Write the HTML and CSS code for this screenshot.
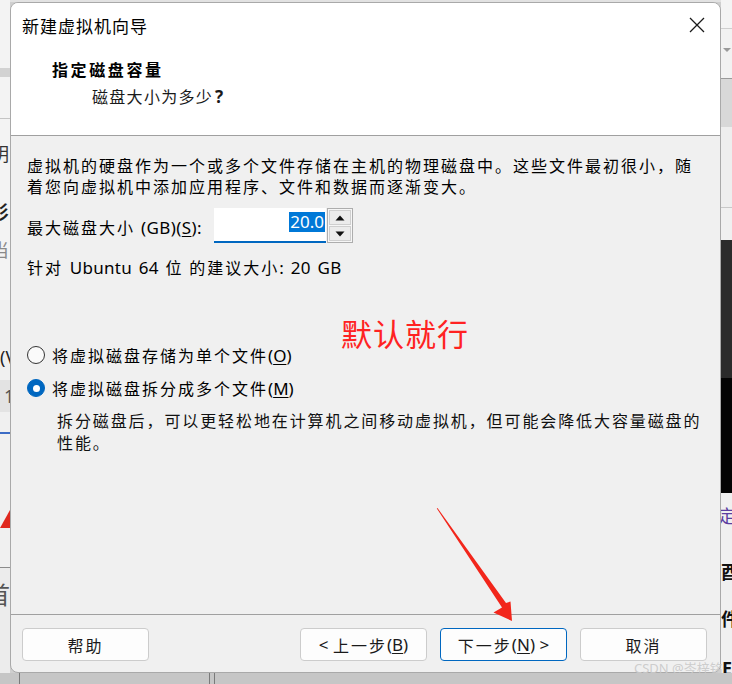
FILE: index.html
```html
<!DOCTYPE html>
<html lang="zh-CN">
<head>
<meta charset="utf-8">
<title>新建虚拟机向导</title>
<link rel="stylesheet" href="styles.css">
</head>
<body>
<div class="screen">
  <div class="strip strip-left">
    <div class="seg l1"></div>
    <div class="seg l2"></div>
    <div class="seg l3"></div>
    <div class="seg l4"></div>
    <div class="seg l5">
      <div class="frag fa">明</div>
      <div class="frag fb">杉</div>
      <div class="frag fc">当</div>
    </div>
    <div class="seg l6"><div class="frag fd">(V</div></div>
    <div class="seg l7"><div class="frag fe">1</div></div>
    <div class="seg l8"></div>
    <div class="seg l9"></div>
    <div class="seg l10"></div>
    <div class="seg l11"><div class="wedge"></div></div>
    <div class="seg l12"></div>
    <div class="seg l13"></div>
    <div class="seg l14"><div class="frag ff">首</div></div>
    <div class="seg l15"></div>
  </div>

  <div class="center">
    <div class="top-gap"></div>
    <div class="dialog">
      <div class="head">
        <div class="titlebar">
          <span class="title">新建虚拟机向导</span>
          <span class="close">
            <svg width="16" height="16" viewBox="0 0 16 16"><path d="M1 1 L15 15 M15 1 L1 15" stroke="#1a1a1a" stroke-width="1.3" fill="none"/></svg>
          </span>
        </div>
        <div class="header">
          <div class="h-title">指定磁盘容量</div>
          <div class="h-sub">磁盘大小为多少<span class="lat q">?</span></div>
        </div>
      </div>

      <div class="body">
        <p class="para">虚拟机的硬盘作为一个或多个文件存储在主机的物理磁盘中。这些文件最初很小，随<br>着您向虚拟机中添加应用程序、文件和数据而逐渐变大。</p>

        <div class="size-row">
          <label class="size-label">最大磁盘大小<span class="lat gb">(GB)(<u>S</u>):</span></label>
          <div class="spin">
            <div class="spin-input"><span class="sel">20.0</span></div>
            <div class="spin-btns">
              <div class="spin-btn"><svg width="10" height="6" viewBox="0 0 10 6"><polygon points="0.5,5.5 5,0.5 9.5,5.5" fill="#111"/></svg></div>
              <div class="spin-btn"><svg width="10" height="6" viewBox="0 0 10 6"><polygon points="0.5,0.5 9.5,0.5 5,5.5" fill="#111"/></svg></div>
            </div>
          </div>
        </div>

        <p class="rec">针对<span class="lat"> Ubuntu 64 </span>位 的建议大小<span class="lat">: 20 GB</span></p>

        <div class="radio-row first">
          <span class="radio"></span>
          <span class="radio-text">将虚拟磁盘存储为单个文件<span class="lat">(<u>O</u>)</span></span>
        </div>
        <div class="radio-row">
          <span class="radio checked"><span class="dot"></span></span>
          <span class="radio-text">将虚拟磁盘拆分成多个文件<span class="lat">(<u>M</u>)</span></span>
        </div>
        <p class="desc">拆分磁盘后，可以更轻松地在计算机之间移动虚拟机，但可能会降低大容量磁盘的<br>性能。</p>

        <div class="note">默认就行</div>
      </div>

      <div class="footer">
        <button class="btn help">帮助</button>
        <button class="btn"><span class="lat">&lt;&nbsp;</span>上一步<span class="lat">(<u>B</u>)</span></button>
        <button class="btn primary">下一步<span class="lat">(<u>N</u>)&nbsp;&gt;</span></button>
        <button class="btn">取消</button>
      </div>
    </div>
    <div class="bottom-strip"></div>
  </div>

  <div class="strip strip-right">
    <div class="seg r1"></div>
    <div class="seg r2"></div>
    <div class="seg r3"><div class="tri"></div></div>
    <div class="seg r4"></div>
    <div class="seg r5"></div>
    <div class="seg r6"></div>
    <div class="seg r7"></div>
    <div class="seg r8"></div>
    <div class="seg r9"></div>
    <div class="seg r10"></div>
    <div class="seg r11">
      <div class="frag ga">定</div>
      <div class="frag gb2">酉</div>
      <div class="frag gc">件</div>
      <div class="frag gd">E</div>
    </div>
    <div class="seg r12"></div>
  </div>
</div>

<svg class="arrow" width="732" height="684" viewBox="0 0 732 684">
  <polygon points="437.5,508 506,603 510.5,601.5 512,621 493.5,612.5 502,607.5 436.8,508.6" fill="#f2261b"/>
</svg>
<div class="watermark">CSDN @岑梓铭</div>
</body>
</html>
```

FILE: styles.css
```css
* { box-sizing: border-box; margin: 0; padding: 0; }
html, body { width: 732px; height: 684px; overflow: hidden; }
body {
  position: relative;
  background: #cfcfcf;
  font-family: "Noto Sans", "Noto Sans CJK SC", sans-serif;
  color: #000;
}
.screen { display: flex; height: 684px; }

/* background window strips */
.strip { display: flex; flex-direction: column; overflow: hidden; flex: none; }
.strip-left { width: 10px; }
.strip-right { width: 11px; }
.seg { flex: none; overflow: hidden; }
.frag {
  font-family: "Noto Sans CJK SC", sans-serif;
  font-size: 18px;
  line-height: 20px;
  white-space: nowrap;
}
.l1 { height: 68px; background: #f3f3f3; }
.l2 { height: 9px; background: #d2d2d2; }
.l3 { height: 41px; background: #f3f3f3; }
.l4 { height: 1px; background: #c4c4c4; }
.l5 { height: 181px; background: #f3f3f3; padding-top: 24px; }
.fa { margin-left: -9px; color: #333; }
.fb { margin-left: -9px; margin-top: 38px; font-weight: 700; color: #222; }
.fc { margin-left: -9px; margin-top: 18px; color: #8a8a8a; }
.l6 { height: 80px; background: #f0f0f0; padding-top: 47px; }
.fd { font-family: "Noto Sans", sans-serif; margin-left: 0; color: #222; }
.l7 { height: 32px; background: #e3e3e3; padding-top: 6px; }
.fe { font-family: "Noto Sans", sans-serif; margin-left: 4px; color: #555; }
.l8 { height: 20px; background: #f0f0f0; }
.l9 { height: 2px; background: #3c6cc5; }
.l10 { height: 76px; background: #f0f0f0; }
.l11 { height: 18px; background: #f0f0f0; }
.wedge { width: 10px; height: 18px; background: #e0281e; clip-path: polygon(100% 0, 100% 100%, 0 100%); }
.l12 { height: 39px; background: #f0f0f0; }
.l13 { height: 1px; background: #8c8c8c; }
.l14 { height: 105px; background: #ececec; padding-top: 13px; }
.ff { font-size: 24px; line-height: 26px; margin-left: -14px; color: #555; }
.l15 { height: 11px; background: #c6c6c6; }

.r1 { height: 28px; background: #f4f4f4; }
.r2 { height: 1px; background: #cfcfcf; }
.r3 { height: 49px; background: #f2f2f2; }
.tri { width: 0; height: 0; margin: 19px 0 0 2px; border-left: 4px solid transparent; border-right: 4px solid transparent; border-top: 4px solid #9a9a9a; }
.r4 { height: 1px; background: #9a9a9a; }
.r5 { height: 48px; background: #d8d8d8; }
.r6 { height: 80px; background: #eeeeee; }
.r7 { height: 1px; background: #c8c8c8; }
.r8 { height: 32px; background: #f0f0f0; }
.r9 { height: 138px; background: #2b2b2b; }
.r10 { height: 115px; background: #040404; }
.r11 { height: 180px; background: #f0f0f0; padding-top: 12px; }
.ga { margin-left: -3px; color: #5b3fa0; }
.gb2 { margin-left: 0; margin-top: 36px; font-weight: 700; color: #111; }
.gc { margin-left: 0; margin-top: 27px; font-weight: 700; color: #111; }
.gd { font-family: "Noto Sans", sans-serif; margin-left: 1px; margin-top: 30px; font-weight: 700; color: #111; }
.r12 { height: 11px; background: #c6c6c6; }

/* center column */
.center { width: 711px; flex: none; display: flex; flex-direction: column; }
.top-gap { height: 2px; background: #e2e2e2; }
.bottom-strip {
  height: 11px;
  background:
    linear-gradient(to right, transparent 9px, #7a7a7a 9px, #7a7a7a 10px, transparent 10px,
      transparent 199px, #7a7a7a 199px, #7a7a7a 200px, transparent 200px,
      transparent 204px, #7a7a7a 204px, #7a7a7a 205px, transparent 205px),
    #c6c6c6;
}

/* dialog */
.dialog {
  position: relative;
  height: 671px;
  border: 1px solid #a9a9a9;
  border-radius: 8px;
  background: #f0f0f0;
  display: flex;
  flex-direction: column;
  overflow: hidden;
}
.lat { font-family: "Noto Sans", sans-serif; letter-spacing: 0; font-size: 17px; }
u { text-underline-offset: 2px; text-decoration-thickness: 1px; }

.head { height: 133px; background: #fff; border-bottom: 1px solid #a0a0a0; flex: none; }
.titlebar { height: 44px; display: flex; align-items: center; justify-content: space-between; padding: 0 15px 0 11px; }
.title { font-family: "Noto Sans CJK SC", sans-serif; font-size: 17px; letter-spacing: 1px; color: #000; }
.close { display: flex; width: 16px; height: 16px; }
.header { padding: 11px 0 0 41px; font-family: "Noto Sans CJK SC", sans-serif; }
.h-title { font-size: 16px; line-height: 22px; font-weight: 700; letter-spacing: 2.6px; color: #000; }
.h-sub { margin-top: 5px; margin-left: 40px; font-size: 16px; line-height: 22px; letter-spacing: 1.3px; color: #1a1a1a; }
.h-sub .q { font-weight: 700; font-size: 17px; margin-left: 2px; }

.body {
  position: relative;
  flex: 1;
  padding: 19px 0 0 16px;
  font-family: "Noto Sans CJK SC", sans-serif;
  font-size: 16px;
  letter-spacing: 2px;
}
.para { line-height: 21px; white-space: nowrap; }

.size-row { margin-top: 11px; height: 35px; display: flex; align-items: center; }
.size-label { width: 187px; white-space: nowrap; line-height: 22px; padding-top: 4px; }
.size-label .gb { margin-left: 6px; letter-spacing: 0.4px; }
.spin { display: flex; height: 35px; }
.spin-input {
  width: 112px;
  height: 35px;
  background: #fff;
  border-bottom: 2px solid #0067c0;
  display: flex;
  justify-content: flex-end;
  align-items: flex-start;
  padding: 4px 1px 0 0;
}
.sel {
  font-family: "Noto Sans", sans-serif;
  font-size: 17px;
  line-height: 20px;
  letter-spacing: 0;
  background: #0078d7;
  color: #fff;
  padding: 0 1px;
}
.spin-btns {
  width: 26px;
  height: 35px;
  margin-left: 1px;
  border: 1px solid #adadad;
  padding: 1px;
  display: flex;
  flex-direction: column;
  gap: 1px;
  background: #f6f6f6;
}
.spin-btn {
  flex: 1;
  border: 1px solid #cfcfcf;
  background: #ececec;
  display: flex;
  align-items: center;
  justify-content: center;
}

.rec { margin-top: 13px; line-height: 22px; white-space: nowrap; }
.rec .lat { word-spacing: 2px; letter-spacing: 0.3px; }

.radio-row { display: flex; align-items: center; height: 22px; margin-top: 11px; }
.radio-row.first { margin-top: 65px; }
.radio {
  width: 18px; height: 18px;
  border-radius: 50%;
  border: 1px solid #333;
  background: #fafafa;
  margin-right: 7px;
  display: flex; align-items: center; justify-content: center;
  flex: none;
}
.radio.checked { background: #0067c0; border-color: #0067c0; }
.dot { width: 7px; height: 7px; border-radius: 50%; background: #fff; }
.radio-text { line-height: 22px; white-space: nowrap; }

.desc { margin-top: 10px; padding-left: 30px; line-height: 22px; color: #111; white-space: nowrap; letter-spacing: 1.9px; }

.note {
  position: absolute;
  left: 330px;
  top: 181px;
  font-family: "Noto Sans CJK SC", sans-serif;
  font-size: 31px;
  line-height: 32px;
  letter-spacing: 1px;
  color: #ff2222;
}

.footer {
  flex: none;
  height: 58px;
  border-top: 1px solid #a0a0a0;
  padding: 13px 13px 0 11px;
  display: flex;
  gap: 13px;
}
.btn {
  width: 127px;
  height: 33px;
  border: 1px solid #cccccc;
  border-radius: 4px;
  background: #fdfdfd;
  font-family: "Noto Sans CJK SC", sans-serif;
  font-size: 16px;
  letter-spacing: 2px;
  color: #1a1a1a;
  display: flex;
  align-items: center;
  justify-content: center;
  white-space: nowrap;
}
.btn.help { margin-right: auto; }
.btn.primary { border-color: #0067c0; }

.arrow { position: absolute; left: 0; top: 0; pointer-events: none; }
.watermark {
  position: absolute;
  left: 634px;
  top: 660px;
  font-family: "Noto Sans", "Noto Sans CJK SC", sans-serif;
  font-size: 13px;
  line-height: 16px;
  color: rgba(200, 200, 200, 0.9);
  white-space: nowrap;
}
```
